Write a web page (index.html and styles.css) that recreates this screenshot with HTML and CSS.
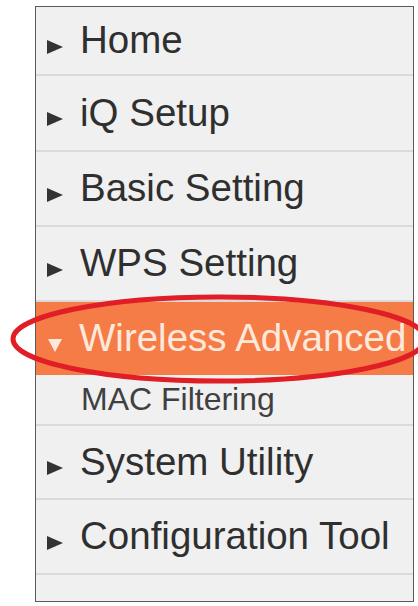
FILE: index.html
```html
<!DOCTYPE html>
<html lang="en">
<head>
    <meta charset="UTF-8">
    <meta name="viewport" content="width=device-width, initial-scale=1.0">
    <title>Menu</title>
    <link rel="stylesheet" href="styles.css">
</head>
<body>

    <div class="menu">
        <div class="item item-home"><span class="arrow"></span>Home</div>
        <div class="item item-iq"><span class="arrow"></span>iQ Setup</div>
        <div class="item"><span class="arrow"></span>Basic Setting</div>
        <div class="item"><span class="arrow"></span>WPS Setting</div>

        <!-- открытый раздел -->
        <div class="item item-open"><span class="arrow arrow-down"></span>Wireless Advanced</div>
        <div class="sub-item">MAC Filtering</div>

        <div class="item item-sys"><span class="arrow"></span>System Utility</div>
        <div class="item"><span class="arrow"></span>Configuration Tool</div>
        <div class="item-empty"></div>
    </div>

    <!-- красная обводка вокруг раздела -->
    <svg class="mark" width="418" height="110" viewBox="0 0 418 110">
        <ellipse cx="219" cy="49" rx="206" ry="42" fill="none" stroke="#e11d25" stroke-width="5"/>
    </svg>

</body>
</html>
```

FILE: styles.css
```css
body {
    margin: 0;
    background-color: white;
    font-family: "Liberation Sans", Arial, sans-serif;
}
.menu {
    width: 377px;
    margin: 6px 0 0 35px;
    background-color: #f0f0f0;
    border: 1px solid #5a5a5a;
}
.item {
    display: flex;
    align-items: center;
    height: 73px;
    padding-left: 11px;
    border-bottom: 2px solid #dadada;
    font-size: 38.5px;
    line-height: 1;
    color: #2f2f2f;
}
.item-home {
    height: 67px;
}
.item-iq {
    height: 74px;
}
.item-sys {
    height: 72px;
}
.arrow {
    width: 0;
    height: 0;
    margin: 12px 17px 0 0;
    border-left: 16px solid #333;
    border-top: 7.5px solid transparent;
    border-bottom: 7.5px solid transparent;
}
.item-open {
    height: 73px;
    background-color: #f57c47;
    color: #fde9dc;
    border-bottom: none;
}
.arrow-down {
    margin: 14px 17px 0 1px;
    border-top: 13px solid #fde9dc;
    border-left: 7.5px solid transparent;
    border-right: 7.5px solid transparent;
    border-bottom: none;
}
.sub-item {
    height: 49px;
    padding-left: 45px;
    border-bottom: 2px solid #dadada;
    font-size: 32px;
    line-height: 49px;
    color: #404040;
}
.item-empty {
    height: 26px;
}
.mark {
    position: absolute;
    left: 0;
    top: 290px;
}
```
